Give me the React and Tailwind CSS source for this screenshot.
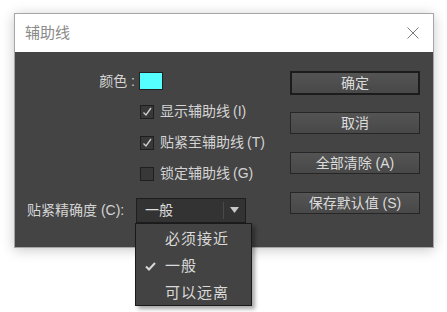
import React from 'react';

const CheckRow = ({ checked, label, key2 }) => (
  <div className="flex items-center h-[31px] pl-[113px]">
    <div className="w-[14px] h-[14px] border border-[#1f1f1f] bg-[#383838] flex items-center justify-center">
      {checked && (
        <svg width="12" height="12" viewBox="0 0 12 12">
          <path d="M2.5 6.5 L5 9 L10 2" fill="none" stroke="#d0d0d0" strokeWidth="1.3" />
        </svg>
      )}
    </div>
    <span className="ml-[6px] text-[14px] text-[#d4d4d4]">
      {label}<span className="ml-[3px]">{key2}</span>
    </span>
  </div>
);

const Btn = ({ children, primary }) => (
  <div
    className={`flex items-center justify-center text-[14px] text-[#dcdcdc] bg-gradient-to-b from-[#545454] to-[#484848] ${
      primary ? 'h-[24px] border-2 border-[#1c1c1c]' : 'h-[22px] border border-[#262626]'
    }`}
  >
    {children}
  </div>
);

export default function App() {
  return (
    <div className="w-[447px] h-[312px] bg-white relative pt-[13px] pl-[14px] font-['Liberation_Sans','Noto_Sans_CJK_SC',sans-serif]">
      <div className="w-[420px] border border-[#a6a6a6] shadow-[0_2px_12px_rgba(0,0,0,0.22)]">
        {/* title bar */}
        <div className="h-[38px] bg-white flex items-center justify-between pl-[10px] pr-[14px]">
          <span className="text-[15px] text-[#8a8a8a]">辅助线</span>
          <svg width="12" height="12" viewBox="0 0 12 12">
            <path d="M0.5 0.5 L11.5 11.5 M11.5 0.5 L0.5 11.5" stroke="#7a7a7a" strokeWidth="1" />
          </svg>
        </div>

        {/* body */}
        <div className="h-[195px] bg-[#444444] flex">
          <div className="flex-1 flex flex-col pt-[20px] pl-[12px]">
            <div className="flex items-center h-[18px]">
              <span className="w-[110px] text-right text-[14px] text-[#d4d4d4] pr-[2px]">颜色 :</span>
              <div className="ml-[2px] w-[24px] h-[18px] bg-[#55ffff] border border-[#222]" />
            </div>
            <div className="mt-[6px]">
              <CheckRow checked label="显示辅助线" key2="(I)" />
              <CheckRow checked label="贴紧至辅助线" key2="(T)" />
              <CheckRow label="锁定辅助线" key2="(G)" />
            </div>
            <div className="mt-[8px] flex items-center h-[26px]">
              <span className="w-[109px] text-[14px] text-[#d4d4d4]">贴紧精确度 (C):</span>
              <div className="w-[110px] h-[25px] bg-[#333333] border border-[#1e1e1e] flex items-center">
                <span className="flex-1 pl-[8px] text-[14px] text-[#dcdcdc]">一般</span>
                <div className="w-px h-[17px] bg-[#1c1c1c] border-r border-[#4a4a4a]" />
                <div className="w-[21px] flex items-center justify-center">
                  <svg width="9" height="6" viewBox="0 0 9 6">
                    <path d="M0 0 H9 L4.5 6 Z" fill="#c8c8c8" />
                  </svg>
                </div>
              </div>
            </div>
          </div>

          <div className="w-[130px] mr-[13px] pt-[19px] flex flex-col">
            <Btn primary>确定</Btn>
            <div className="mt-[17px]"><Btn>取消</Btn></div>
            <div className="mt-[18px]"><Btn>全部清除 (A)</Btn></div>
            <div className="mt-[18px]"><Btn>保存默认值 (S)</Btn></div>
          </div>
        </div>
      </div>

      {/* open dropdown list */}
      <div className="absolute left-[135px] top-[223px] w-[117px] h-[83px] bg-[#434343] border border-[#1a1a1a] shadow-[3px_3px_4px_rgba(0,0,0,0.35)] py-[2px]">
        {[
          { t: '必须接近', c: false },
          { t: '一般', c: true },
          { t: '可以远离', c: false },
        ].map((it) => (
          <div key={it.t} className="h-[27px] flex items-center">
            <div className="w-[29px] flex justify-center">
              {it.c && (
                <svg width="11" height="9" viewBox="0 0 11 9">
                  <path d="M1 4.5 L4 7.5 L10 1" fill="none" stroke="#d8d8d8" strokeWidth="2" />
                </svg>
              )}
            </div>
            <span className="text-[15px] tracking-[1px] text-[#dadada]">{it.t}</span>
          </div>
        ))}
      </div>
    </div>
  );
}
